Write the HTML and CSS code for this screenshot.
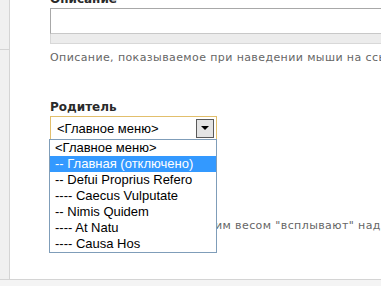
FILE: index.html
```html
<!DOCTYPE html>
<html lang="ru">
<head>
    <meta charset="UTF-8">
    <title>Пункт меню</title>
    <link rel="stylesheet" href="styles.css">
</head>
<body>
    <div class="page">
        <div class="sidebar">
            <div class="sidebar-block"></div>
        </div>
        <div class="content">
            <div class="form-item">
                <label class="field-label">Описание</label>
                <div class="textarea"></div>
                <div class="grippie"></div>
                <div class="description">Описание, показываемое при наведении мыши на ссылку меню.</div>
            </div>

            <div class="form-item parent">
                <label class="field-label">Родитель</label>
                <div class="select-wrap">
                    <div class="select">
                        <span>&lt;Главное меню&gt;</span>
                        <span class="select-btn"><span class="arrow"></span></span>
                    </div>
                    <ul class="options">
                        <li>&lt;Главное меню&gt;</li>
                        <li class="selected">-- Главная (отключено)</li>
                        <li>-- Defui Proprius Refero</li>
                        <li>---- Caecus Vulputate</li>
                        <li>-- Nimis Quidem</li>
                        <li>---- At Natu</li>
                        <li>---- Causa Hos</li>
                    </ul>
                </div>
                <div class="description weight">В списках пункты с меньшим весом "всплывают" над остальными.</div>
            </div>
        </div>
    </div>
</body>
</html>
```

FILE: styles.css
```css
body {
    margin: 0;
    background: #f4f4f4;
    font-family: "DejaVu Sans", Verdana, sans-serif;
    overflow: hidden;
}
.page {
    display: flex;
    height: 279px;
    background: #fff;
    border-bottom: 1px solid #d4d4d4;
    overflow: hidden;
}
.sidebar {
    width: 9px;
    flex-shrink: 0;
    background: #f0f0f0;
    border-right: 1px solid #d4d4d4;
}
.sidebar-block {
    height: 49px;
    border-bottom: 1px solid #d4d4d4;
}
.content {
    flex: 1;
    padding-left: 40px;
    margin-top: -9px;
}
.field-label {
    display: block;
    font-size: 12px;
    font-weight: bold;
    line-height: 16px;
    color: #2a2a2a;
}
.textarea {
    margin-top: 1px;
    width: 400px;
    height: 24px;
    border: 1px solid #a8a8a8;
    border-bottom-color: #c8c8c8;
    background: #fff;
}
.grippie {
    width: 400px;
    height: 9px;
    background: #ececec;
    border: 1px solid #d8d8d8;
    border-top: 0;
}
.description {
    margin-top: 6px;
    font-size: 11px;
    line-height: 16px;
    letter-spacing: 0.4px;
    color: #666;
    white-space: nowrap;
}
.parent {
    margin-top: 33px;
}
.select-wrap {
    position: relative;
    width: 167px;
    margin-top: 1px;
}
.select {
    display: flex;
    align-items: center;
    justify-content: space-between;
    height: 22px;
    padding: 0 2px 0 6px;
    border: 1px solid #e2bf6c;
    font-family: "Liberation Sans", Arial, sans-serif;
    font-size: 13px;
    color: #000;
}
.select-btn {
    display: flex;
    align-items: center;
    justify-content: center;
    width: 16px;
    height: 17px;
    border: 1px solid #5a5a5a;
    background: #e4e4e4;
}
.arrow {
    width: 0;
    height: 0;
    border-left: 4px solid transparent;
    border-right: 4px solid transparent;
    border-top: 4px solid #000;
}
.options {
    position: absolute;
    top: 23px;
    left: -1px;
    width: 166px;
    margin: 0;
    padding: 0;
    list-style: none;
    background: #fff;
    border: 1px solid #7f9db9;
    font-family: "Liberation Sans", Arial, sans-serif;
    font-size: 13px;
    color: #000;
}
.options li {
    height: 16px;
    line-height: 16px;
    padding-left: 5px;
    white-space: nowrap;
}
.options .selected {
    background: #3399ff;
    color: #fff;
}
.weight {
    margin-top: 78px;
}
```
